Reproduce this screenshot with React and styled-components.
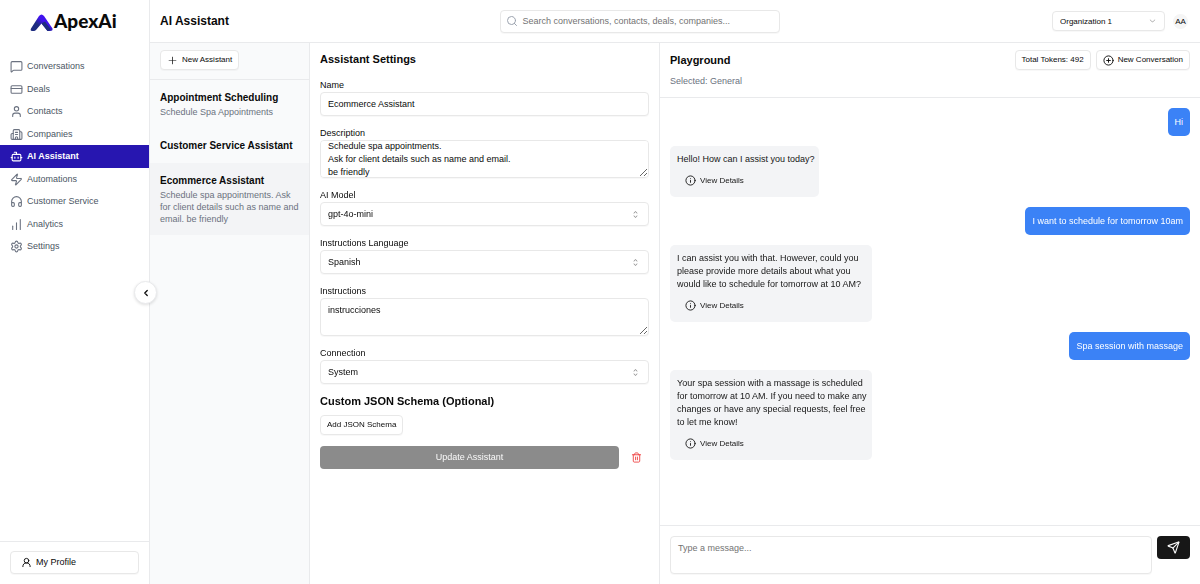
import React from 'react';
import styled, { createGlobalStyle, css } from 'styled-components';
import {
  MessageSquare, CreditCard, User, UserRound, Building2, Bot, Zap, Headphones,
  ChartNoAxesColumnIncreasing, Settings, ChevronLeft, Search, Send, Info,
} from 'lucide-react';
import { RxCaretSort, RxChevronDown, RxPlus } from 'react-icons/rx';
import { LuCirclePlus, LuTrash2 } from 'react-icons/lu';

const GlobalStyle = createGlobalStyle`
  * {
    box-sizing: border-box;
  }
  body {
    margin: 0;
    background: #ffffff;
    color: #0a0a0a;
    font-family: 'Liberation Sans', Arial, Helvetica, sans-serif;
    font-size: 9px;
    line-height: 13px;
  }
  button, input, textarea, select {
    font: inherit;
    color: inherit;
  }
  h1, h2, h3, p {
    margin: 0;
  }
`;

const Page = styled.div`
  display: flex;
  height: 100vh;
`;

const Sidebar = styled.aside`
  position: relative;
  display: flex;
  flex-direction: column;
  flex: 0 0 150px;
  border-right: 1px solid #e9eaec;
`;

const LogoLink = styled.a`
  display: flex;
  justify-content: center;
  padding: 10px 0 12px;
  color: #0a0a0a;
  text-decoration: none;
`;

const Nav = styled.nav`
  display: flex;
  flex-direction: column;
  padding-top: 9px;
  flex: 1;
`;

const NavLink = styled.a`
  display: flex;
  align-items: center;
  gap: 4px;
  height: 22px;
  padding-left: 10px;
  text-decoration: none;
  color: #4b5563;
  svg {
    color: #6b7280;
  }
  &:nth-child(odd) {
    height: 23px;
  }
  ${props => props.$active && css`
    background: #2716b0;
    color: #ffffff;
    font-weight: 700;
    svg {
      color: #ffffff;
    }
  `}
`;

const SidebarFooter = styled.div`
  border-top: 1px solid #e9eaec;
  padding: 9px 10px 10px;
`;

const fieldBorder = css`
  border: 1px solid #e8e8e8;
  border-radius: 4px;
  background: #ffffff;
  box-shadow: 0 1px 1px rgba(0, 0, 0, 0.03);
`;

const ProfileButton = styled.button`
  ${fieldBorder}
  display: flex;
  align-items: center;
  gap: 4px;
  width: 100%;
  height: 23px;
  padding: 0 10px;
`;

const CollapseButton = styled.button`
  position: absolute;
  right: -8px;
  top: 50%;
  display: flex;
  align-items: center;
  justify-content: center;
  width: 23px;
  height: 23px;
  margin-top: -11px;
  padding: 0;
  border: 1px solid #e9eaec;
  border-radius: 50%;
  background: #ffffff;
  box-shadow: 0 1px 3px rgba(0, 0, 0, 0.12);
  z-index: 1;
`;

const Main = styled.div`
  display: flex;
  flex-direction: column;
  flex: 1;
  min-width: 0;
`;

const TopBar = styled.header`
  display: flex;
  justify-content: space-between;
  align-items: center;
  flex: 0 0 43px;
  padding: 0 12px 0 10px;
  border-bottom: 1px solid #e9eaec;
`;

const PageTitle = styled.h1`
  font-size: 12px;
  line-height: 18px;
`;

const SearchBox = styled.label`
  ${fieldBorder}
  display: flex;
  align-items: center;
  gap: 4px;
  width: 280px;
  height: 23px;
  padding: 0 5px;
  color: #9ca3af;
`;

const SearchInput = styled.input`
  flex: 1;
  min-width: 0;
  padding: 0;
  border: 0;
  outline: 0;
  background: none;
  color: #0a0a0a;
  &::placeholder {
    color: #737373;
  }
`;

const Account = styled.div`
  display: flex;
  align-items: center;
  gap: 8px;
`;

const Avatar = styled.span`
  display: flex;
  align-items: center;
  justify-content: center;
  width: 15px;
  height: 15px;
  border-radius: 50%;
  background: #f5f5f5;
  font-size: 8px;
`;

const SelectWrap = styled.div`
  ${fieldBorder}
  position: relative;
  width: ${props => props.$width || '100%'};
  height: ${props => (props.$small ? '20px' : '24px')};
  font-size: ${props => (props.$small ? '8px' : '9px')};
  svg {
    position: absolute;
    right: 7px;
    top: 50%;
    margin-top: -5px;
    color: #8a8a8a;
    pointer-events: none;
  }
`;

const Select = styled.select`
  appearance: none;
  display: block;
  width: 100%;
  height: 100%;
  padding: 0 7px;
  border: 0;
  background: none;
`;

const Content = styled.div`
  display: flex;
  flex: 1;
  min-height: 0;
`;

const AssistantPanel = styled.section`
  flex: 0 0 160px;
  border-right: 1px solid #e9eaec;
  background: #f9fafb;
`;

const AssistantToolbar = styled.div`
  padding: 7px 10px 9px;
  border-bottom: 1px solid #e9eaec;
`;

const SmallButton = styled.button`
  ${fieldBorder}
  display: inline-flex;
  align-items: center;
  gap: 4px;
  height: 20px;
  padding: 0 6px;
  font-size: 8px;
  line-height: 12px;
  white-space: nowrap;
`;

const AssistantItem = styled.article`
  padding: 10px;
  background: ${props => (props.$active ? '#f3f4f6' : 'transparent')};
`;

const AssistantName = styled.h3`
  font-size: 10px;
  line-height: 15px;
`;

const AssistantText = styled.p`
  margin-top: 1px;
  line-height: 12px;
  color: #6b7280;
`;

const SettingsPanel = styled.form`
  flex: 0 0 350px;
  padding: 8px 10px;
  border-right: 1px solid #e9eaec;
`;

const PanelTitle = styled.h2`
  font-size: 11px;
  line-height: 17px;
`;

const Fields = styled.div`
  display: flex;
  flex-direction: column;
  gap: 11px;
  padding: 11px 0 9px;
`;

const Field = styled.div`
  display: flex;
  flex-direction: column;
`;

const Label = styled.label`
  line-height: 13px;
`;

const TextInput = styled.input`
  ${fieldBorder}
  height: 24px;
  padding: 0 7px;
`;

const TextArea = styled.textarea`
  ${fieldBorder}
  display: block;
  width: 100%;
  height: 38px;
  padding: 5px 7px;
  resize: ${props => (props.$fixed ? 'none' : 'vertical')};
  scrollbar-width: none;
  &::placeholder {
    color: #737373;
  }
`;

const SchemaRow = styled.div`
  padding: 5px 0 11px;
`;

const Actions = styled.div`
  display: flex;
  align-items: center;
  gap: 5px;
`;

const UpdateButton = styled.button`
  flex: 1;
  height: 23px;
  border: 0;
  border-radius: 4px;
  background: #8b8b8b;
  color: #fafafa;
`;

const DeleteButton = styled.button`
  display: flex;
  align-items: center;
  justify-content: center;
  width: 25px;
  height: 23px;
  padding: 0;
  border: 0;
  background: none;
  color: #ef4444;
`;

const Playground = styled.section`
  display: flex;
  flex-direction: column;
  flex: 1;
  min-width: 0;
`;

const PlaygroundHeader = styled.header`
  display: flex;
  justify-content: space-between;
  align-items: flex-start;
  height: 55px;
  padding: 7px 10px;
  border-bottom: 1px solid #e9eaec;
`;

const PlaygroundTitle = styled.div`
  display: flex;
  flex-direction: column;
  gap: 6px;
  padding-top: 2px;
`;

const Muted = styled.p`
  color: #6b7280;
`;

const ButtonGroup = styled.div`
  display: flex;
  gap: 5px;
`;

const Messages = styled.div`
  display: flex;
  flex-direction: column;
  gap: 10px;
  flex: 1;
  min-height: 0;
  overflow: auto;
  padding: 10px;
`;

const Bubble = styled.div`
  align-self: ${props => (props.$mine ? 'flex-end' : 'flex-start')};
  max-width: 202px;
  padding: ${props => (props.$mine ? '8px 7px 7px' : '7px 4px 7px 7px')};
  border-radius: 5px;
  background: ${props => (props.$mine ? '#3b82f6' : '#f3f4f6')};
  color: ${props => (props.$mine ? '#ffffff' : '#171717')};
`;

const DetailsButton = styled.button`
  display: flex;
  align-items: center;
  gap: 4px;
  height: 20px;
  margin-top: 4px;
  padding: 0 8px;
  border: 0;
  background: none;
  font-size: 8px;
`;

const Composer = styled.form`
  display: flex;
  align-items: flex-start;
  gap: 5px;
  padding: 10px;
  border-top: 1px solid #e9eaec;
`;

const SendButton = styled.button`
  display: flex;
  align-items: center;
  justify-content: center;
  flex: 0 0 33px;
  height: 23px;
  padding: 0;
  border: 0;
  border-radius: 4px;
  background: #171717;
  color: #fafafa;
`;

const navItems = [
  { label: 'Conversations', icon: MessageSquare },
  { label: 'Deals', icon: CreditCard },
  { label: 'Contacts', icon: User },
  { label: 'Companies', icon: Building2 },
  { label: 'AI Assistant', icon: Bot, active: true },
  { label: 'Automations', icon: Zap },
  { label: 'Customer Service', icon: Headphones },
  { label: 'Analytics', icon: ChartNoAxesColumnIncreasing },
  { label: 'Settings', icon: Settings },
];

const assistants = [
  { name: 'Appointment Scheduling', text: 'Schedule Spa Appointments' },
  { name: 'Customer Service Assistant' },
  {
    name: 'Ecommerce Assistant',
    text: 'Schedule spa appointments. Ask for client details such as name and email. be friendly',
    active: true,
  },
];

const messages = [
  { mine: true, text: 'Hi' },
  { text: 'Hello! How can I assist you today?' },
  { mine: true, text: 'I want to schedule for tomorrow 10am' },
  { text: 'I can assist you with that. However, could you please provide more details about what you would like to schedule for tomorrow at 10 AM?' },
  { mine: true, text: 'Spa session with massage' },
  { text: 'Your spa session with a massage is scheduled for tomorrow at 10 AM. If you need to make any changes or have any special requests, feel free to let me know!' },
];

const Logo = () => (
  <svg width="90" height="24" viewBox="0 0 90 24" role="img" aria-label="ApexAi">
    <defs>
      <linearGradient id="peak" x1="0" y1="1" x2="1" y2="0">
        <stop offset="0.35" stopColor="#1d2b80" />
        <stop offset="0.6" stopColor="#4012ee" />
      </linearGradient>
    </defs>
    <path d="M1 18.5 L9 6 Q11.5 3 14 6 L22.5 18.5 Q23 21 20 21 H17.5 L11.5 13.5 L6 20 Q5 21 4 21 H2 Q0 21 1 18.5 Z" fill="url(#peak)" />
    <path d="M11.5 13.5 L15 11.5 L20.5 19 Q20 21 17.5 21 Z" fill="#1d2b80" />
    <text x="24" y="18" fontSize="19" fontWeight="900" fontFamily="Lato, sans-serif" fill="#0a0a0a">ApexAi</text>
  </svg>
);

const FormSelect = ({ id, label, value }) => (
  <Field>
    <Label htmlFor={id}>{label}</Label>
    <SelectWrap>
      <Select id={id} defaultValue={value}>
        <option>{value}</option>
      </Select>
      <RxCaretSort size={11} />
    </SelectWrap>
  </Field>
);

class App extends React.Component {
  constructor(props) {
    super(props);
    this.description = React.createRef();
  }

  componentDidMount() {
    // skip the top padding so all three lines of the description show
    this.description.current.scrollTop = 6;
  }

  render() {
    return (
      <Page>
        <GlobalStyle />
        <Sidebar>
          <LogoLink href="#home"><Logo /></LogoLink>
          <Nav>
            {navItems.map(item => {
              const Icon = item.icon;
              return (
                <NavLink key={item.label} href="#" $active={item.active}>
                  <Icon size={13} strokeWidth={2} />
                  {item.label}
                </NavLink>
              );
            })}
          </Nav>
          <SidebarFooter>
            <ProfileButton type="button">
              <UserRound size={11} />
              My Profile
            </ProfileButton>
          </SidebarFooter>
          <CollapseButton type="button" aria-label="Collapse sidebar">
            <ChevronLeft size={10} strokeWidth={3} />
          </CollapseButton>
        </Sidebar>
        <Main>
          <TopBar>
            <PageTitle>AI Assistant</PageTitle>
            <SearchBox>
              <Search size={12} strokeWidth={2} />
              <SearchInput aria-label="Search" placeholder="Search conversations, contacts, deals, companies..." />
            </SearchBox>
            <Account>
              <SelectWrap $small $width="113px">
                <Select aria-label="Organization" defaultValue="Organization 1">
                  <option>Organization 1</option>
                </Select>
                <RxChevronDown size={9} />
              </SelectWrap>
              <Avatar>AA</Avatar>
            </Account>
          </TopBar>
          <Content>
            <AssistantPanel>
              <AssistantToolbar>
                <SmallButton type="button">
                  <RxPlus size={11} />
                  New Assistant
                </SmallButton>
              </AssistantToolbar>
              {assistants.map(item => (
                <AssistantItem key={item.name} $active={item.active}>
                  <AssistantName>{item.name}</AssistantName>
                  {item.text && <AssistantText>{item.text}</AssistantText>}
                </AssistantItem>
              ))}
            </AssistantPanel>
            <SettingsPanel>
              <PanelTitle>Assistant Settings</PanelTitle>
              <Fields>
                <Field>
                  <Label htmlFor="name">Name</Label>
                  <TextInput id="name" defaultValue="Ecommerce Assistant" />
                </Field>
                <Field>
                  <Label htmlFor="description">Description</Label>
                  <TextArea
                    id="description"
                    ref={this.description}
                    defaultValue={'Schedule spa appointments.\nAsk for client details such as name and email.\nbe friendly'}
                  />
                </Field>
                <FormSelect id="model" label="AI Model" value="gpt-4o-mini" />
                <FormSelect id="language" label="Instructions Language" value="Spanish" />
                <Field>
                  <Label htmlFor="instructions">Instructions</Label>
                  <TextArea id="instructions" defaultValue="instrucciones" />
                </Field>
                <FormSelect id="connection" label="Connection" value="System" />
              </Fields>
              <PanelTitle as="h3">Custom JSON Schema (Optional)</PanelTitle>
              <SchemaRow>
                <SmallButton type="button">Add JSON Schema</SmallButton>
              </SchemaRow>
              <Actions>
                <UpdateButton type="button">Update Assistant</UpdateButton>
                <DeleteButton type="button" aria-label="Delete assistant">
                  <LuTrash2 size={11} />
                </DeleteButton>
              </Actions>
            </SettingsPanel>
            <Playground>
              <PlaygroundHeader>
                <PlaygroundTitle>
                  <PanelTitle>Playground</PanelTitle>
                  <Muted>Selected: General</Muted>
                </PlaygroundTitle>
                <ButtonGroup>
                  <SmallButton type="button">Total Tokens: 492</SmallButton>
                  <SmallButton type="button">
                    <LuCirclePlus size={11} />
                    New Conversation
                  </SmallButton>
                </ButtonGroup>
              </PlaygroundHeader>
              <Messages>
                {messages.map(message => (
                  <Bubble key={message.text} $mine={message.mine}>
                    {message.text}
                    {!message.mine && (
                      <DetailsButton type="button">
                        <Info size={11} />
                        View Details
                      </DetailsButton>
                    )}
                  </Bubble>
                ))}
              </Messages>
              <Composer>
                <TextArea $fixed aria-label="Message" placeholder="Type a message..." />
                <SendButton type="button" aria-label="Send message">
                  <Send size={13} />
                </SendButton>
              </Composer>
            </Playground>
          </Content>
        </Main>
      </Page>
    );
  }
}

export default App;
